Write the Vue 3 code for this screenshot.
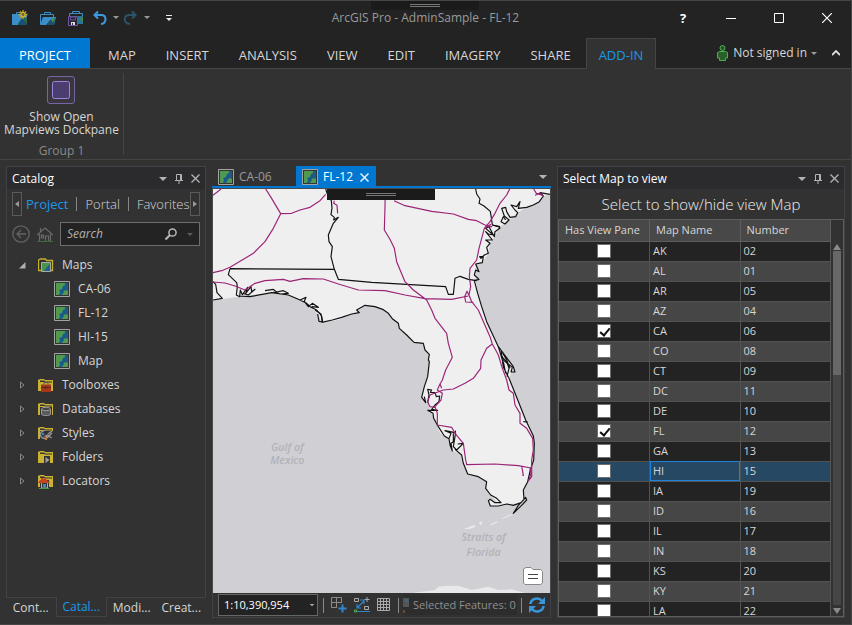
<script setup>
import { ref } from 'vue'

const ribbonTabs = ['MAP', 'INSERT', 'ANALYSIS', 'VIEW', 'EDIT', 'IMAGERY', 'SHARE']
const maps = ['CA-06', 'FL-12', 'HI-15', 'Map']
const folders = ['Toolboxes', 'Databases', 'Styles', 'Folders', 'Locators']
const dockTabs = ['Cont...', 'Catal...', 'Modi...', 'Creat...']
const search = ref('')
const rows = ref([
  ['AK', '02'], ['AL', '01'], ['AR', '05'], ['AZ', '04'], ['CA', '06', true],
  ['CO', '08'], ['CT', '09'], ['DC', '11'], ['DE', '10'], ['FL', '12', true],
  ['GA', '13'], ['HI', '15'], ['IA', '19'], ['ID', '16'], ['IL', '17'],
  ['IN', '18'], ['KS', '20'], ['KY', '21'], ['LA', '22']
].map(([name, number, open]) => ({ name, number, open: !!open })))
const selected = ref('HI')
</script>

<template>
  <div class="app">
    <header class="titlebar">
      <div class="quick">
        <button aria-label="New project" class="q">
          <svg width="16" height="16" viewBox="0 0 16 16"><path d="M4.500 4V2.500H9" fill="none" stroke="#3a8fc8" /><path d="M0 4h15v11H0z" fill="#3a8fc8" /><path d="M6 14l4-6 5-1v8H6z" fill="#1d4f70" /><path d="M11 9l4-1v6z" fill="#2f6b3a" /><path d="M11 0v9M6.500 4.500h9M8 1.500l6 6M14 1.500l-6 6" stroke="#c8ac2c" stroke-width="1.300" /><circle cx="11" cy="4.500" r="2" fill="#6e6024" stroke="#e0c030" /></svg>
        </button>
        <button aria-label="Open project" class="q">
          <svg width="16" height="16" viewBox="0 0 16 16"><path d="M4.500 4V2.500h6V4M.5 14V4.500h13V7" fill="none" stroke="#3a8fc8" /><path d="M0 15L3 7h13l-2 8z" fill="#3a8fc8" /><path d="M6 15l4-5 5-2-1 7z" fill="#1d4f70" /><path d="M11 9l4-1-2 5z" fill="#4c8f3c" /></svg>
        </button>
        <button aria-label="Save project" class="q">
          <svg width="16" height="16" viewBox="0 0 16 16"><path d="M4.500 4V1.500h7V4M1.500 6V3.500h13v10H10" fill="none" stroke="#3a8fc8" /><path d="M10 6h5v8h-5z" fill="#2b7395" /><path d="M12 8l3-1v5z" fill="#4c8f3c" /><path d="M.5 6.500h9v9h-9z" fill="#272330" stroke="#7355a8" /><path d="M2.500 7h5v3h-5z" fill="#272330" stroke="#65509a" /><path d="M3 12h4v3H3z" fill="#ddd" /><path d="M4 13h1v2H4z" fill="#333" /></svg>
        </button>
        <button aria-label="Undo" class="q undo">
          <svg width="16" height="16" viewBox="0 0 16 16"><path d="M6 1.500L2.500 5 6 8.500M3 5h6c6 0 6 8 0 9" fill="none" stroke="#3e9bdd" stroke-width="2" /></svg>
        </button>
        <button aria-label="Undo list" class="drop"><i class="caret small"></i></button>
        <button aria-label="Redo" class="q redo">
          <svg width="16" height="16" viewBox="0 0 16 16"><path d="M9 1.500L12.500 5 9 8.500M12 5H7C0 5 0 13 7 14" fill="none" stroke="#2c536c" stroke-width="2" /></svg>
        </button>
        <button aria-label="Redo list" class="drop"><i class="caret small"></i></button>
        <button aria-label="Customize" class="q custom">
          <svg width="6" height="6" viewBox="0 0 6 6"><path d="M0 0h6v1H0zM0 3h6L3 6z" fill="#e8e8e8" /></svg>
        </button>
      </div>
      <h1>ArcGIS Pro - AdminSample - FL-12</h1>
      <div class="window">
        <button aria-label="Help"><b>?</b></button>
        <button aria-label="Minimize"><svg width="10" height="10"><path d="M0 5.500h10" stroke="#fff" /></svg></button>
        <button aria-label="Maximize"><svg width="10" height="10"><path d="M.5.5h9v9h-9z" stroke="#fff" fill="none" /></svg></button>
        <button aria-label="Close"><svg width="10" height="10"><path d="M0 0l10 10M10 0L0 10" stroke="#fff" stroke-width="1.200" /></svg></button>
      </div>
      <div class="grip top"><i></i></div>
    </header>

    <nav class="tabs">
      <button class="project">PROJECT</button>
      <button v-for="t in ribbonTabs" :key="t">{{ t }}</button>
      <button class="current">ADD-IN</button>
      <div class="account">
        <svg width="11" height="16" viewBox="0 0 11 16"><circle cx="5.500" cy="3" r="2.500" fill="#28502a" stroke="#4fae50" /><path d="M.5 7.500l2-1h6l2 1V13h-2v2.500h-6V13h-2z" fill="#28602c" stroke="#4fae50" /></svg>
        <button class="signin">Not signed in <i class="caret tiny"></i></button>
        <button aria-label="Collapse ribbon" class="collapse"><svg width="8" height="6"><path d="M0 5l4-4 4 4" fill="none" stroke="#ddd" stroke-width="1.800" /></svg></button>
      </div>
    </nav>

    <section class="ribbon">
      <div class="group">
        <button class="big">
          <svg width="28" height="28" viewBox="0 0 28 28"><rect x=".5" y=".5" width="27" height="27" rx="2.500" fill="#39363e" stroke="#7765a5" /><rect x="5.500" y="5.500" width="17" height="17" rx="2" fill="#4c3d70" stroke="#9c86dc" /></svg>
          <span>Show Open<br>Mapviews Dockpane</span>
        </button>
        <p>Group 1</p>
      </div>
    </section>

    <main class="workspace">
      <aside class="dock">
        <div class="catalog">
          <div class="panehead">
            <h2>Catalog</h2>
            <button aria-label="Pane options"><i class="caret"></i></button>
            <button aria-label="Pin"><svg width="8" height="10"><path d="M1.500 6V.5h5V6M0 6.500h8M4 7v3M5.500 1v5" stroke="#b4b4b4" fill="none" /></svg></button>
            <button aria-label="Close pane"><svg width="9" height="9"><path d="M.5.5l8 8M8.500.5l-8 8" stroke="#b4b4b4" stroke-width="1.300" /></svg></button>
          </div>
          <div class="pages">
            <button aria-label="Scroll left" class="step"><svg width="4" height="6"><path d="M4 0v6L0 3z" fill="#999" /></svg></button>
            <a href="#project" class="on">Project</a><a href="#portal">Portal</a><a href="#favorites">Favorites</a>
            <button aria-label="Scroll right" class="step"><svg width="4" height="6"><path d="M0 0v6l4-3z" fill="#999" /></svg></button>
          </div>
          <div class="find">
            <button aria-label="Back"><svg width="18" height="18"><circle cx="9" cy="9" r="8.200" fill="none" stroke="#636363" stroke-width="1.300" /><path d="M14 9H5M9 5L5 9l4 4" fill="none" stroke="#636363" stroke-width="1.300" /></svg></button>
            <button aria-label="Home"><svg width="16" height="16"><path d="M0 9l8-7 8 7M2.500 8v7M13.500 8v7M3.500 2v4M8.500 15v-5h3v5M4.500 9v3h2V9z" fill="none" stroke="#6a6a6a" stroke-width="1.200" /><path d="M0 15.500h16" stroke="#3a6b3a" /></svg></button>
            <label class="searchbox">
              <input v-model="search" type="text" placeholder="Search" aria-label="Search">
              <svg width="12" height="12"><circle cx="7.500" cy="4.500" r="3.600" fill="none" stroke="#b8b8b8" stroke-width="1.500" /><path d="M5 7l-4.500 4.500" stroke="#b8b8b8" stroke-width="2" /></svg>
              <i class="caret tiny dim"></i>
            </label>
          </div>
          <ul class="tree">
            <li>
              <svg class="arrow" width="7" height="7"><path d="M6.500 0v6.500H0z" fill="#b0b0b0" /></svg>
              <svg class="icon" width="16" height="16"><path d="M3 13.500H.5V3l2-1h5l1 1.500h6v10H13" fill="none" stroke="#c9b02f" stroke-width="1.300" /><path d="M3.500 5.500h9v9h-9z" fill="#4b944e" stroke="#aaa" /><path d="M12 7v7H6l3-4z" fill="#1f5f91" /></svg>
              <span>Maps</span>
            </li>
            <li v-for="m in maps" :key="m" class="child">
              <svg class="icon" width="16" height="16" viewBox="0 0 16 16"><path d="M.5.500h15v15H.5z" fill="#343434" stroke="#a4a4a4" /><path d="M2 2h12v12H2z" fill="#4f9a4e" /><path d="M11 2h3v8l-2-1-2 1-1 3-2 1H5l1-3-1-2 3-1 1-3 2-1z" fill="#1b5b8c" /></svg>
              <span>{{ m }}</span>
            </li>
            <li v-for="f in folders" :key="f">
              <svg class="arrow" width="7" height="8"><path d="M1.500 1v6l3.500-3z" fill="none" stroke="#888" /></svg>
              <svg class="icon" width="16" height="16" viewBox="0 0 16 16">
                <path d="M0 3l2-1h4l1 1h8v11H0z" fill="#cbb233" /><path d="M2 3.500h4l1 1h7v1H7L6 5H2z" fill="#333" />
                <g v-if="f === 'Toolboxes'"><path d="M3 7.500h10V15H3z" fill="#a63619" /><path d="M3 10.500h10M8 9v3" stroke="#57281c" /><path d="M6 7.500v-2h4v2" fill="none" stroke="#555" /></g>
                <g v-else-if="f === 'Databases'"><path d="M2 6h12v9H2z" fill="#333" /><path d="M3.500 8v5c0 2 9 2 9 0V8" fill="#5a5a5a" stroke="#999" /><ellipse cx="8" cy="8" rx="4.500" ry="1.700" fill="#444" stroke="#999" /></g>
                <g v-else-if="f === 'Styles'"><path d="M2 6h13v9H2z" fill="#333" /><path d="M6.500 5.500a4 4 0 1 0 3 6.500l-2-1 2-1 4 3M10 9l4-3M14 8l-5 5" fill="none" stroke="#999" stroke-width="1.300" /><circle cx="5" cy="9" r="1.200" fill="#3b90c8" /><circle cx="6" cy="12" r="1" fill="#b64a28" /><circle cx="8" cy="14" r="1.200" fill="#c07b30" /></g>
                <g v-else-if="f === 'Folders'"><path d="M6 7h6v9H6z" fill="#333" /><path d="M7.500 8v6l4-3z" fill="#a0a0a0" /></g>
                <g v-else><path d="M2 7h9v8H2z" fill="#333" /><path d="M3.500 10v5h6v-5" fill="#333" stroke="#aaa" /><path d="M0 10l2-3h1V5h2v1l2-1 5 5z" fill="#c4451f" /><path d="M5 11h3v3H5z" fill="#2f8fc6" /><path d="M1 15.500h10" stroke="#4c9a45" /></g>
              </svg>
              <span>{{ f }}</span>
            </li>
          </ul>
        </div>
        <div class="docktabs">
          <button v-for="(t, i) in dockTabs" :key="t" :class="{ on: i === 1 }">{{ t }}</button>
        </div>
      </aside>

      <section class="view">
        <div class="viewtabs">
          <button v-for="m in ['CA-06', 'FL-12']" :key="m" :class="{ on: m === 'FL-12' }">
            <svg width="16" height="16" viewBox="0 0 16 16"><path d="M.5.500h15v15H.5z" fill="#343434" stroke="#a4a4a4" /><path d="M2 2h12v12H2z" fill="#4f9a4e" /><path d="M11 2h3v8l-2-1-2 1-1 3-2 1H5l1-3-1-2 3-1 1-3 2-1z" fill="#1b5b8c" /></svg>
            {{ m }}
            <svg v-if="m === 'FL-12'" class="x" width="9" height="9"><path d="M.5.5l8 8M8.500.5l-8 8" stroke="#e6f2fb" stroke-width="1.500" /></svg>
          </button>
          <button aria-label="View list" class="more"><i class="caret"></i></button>
        </div>
        <div class="map">
          <svg class="canvas" viewBox="24 87 1011 1212" preserveAspectRatio="xMidYMid slice">
            <path fill="#efefef" d="M24 87H1035V103L1015 108 1003 125 965 142 938 158 912 180 885 200 868 230 855 250 850 280 832 308 812 312 812 360 818 400 830 440 845 485 880 560 925 625 912 655 935 712 962 780 985 828 988 850 986 900 976 930 968 965 955 990 957 1020 945 1030 905 1032 880 1038 855 1038 852 1018 878 1030 857 1005 842 985 845 965 820 950 788 942 775 910 770 885 740 870 735 850 730 835 705 820 690 780 675 750 668 725 650 712 658 680 668 650 673 605 673 583 660 570 655 550 627 547 605 525 583 505 580 490 562 476 550 460 535 449 510 440 480 436 455 455 440 462 400 480 350 487 338 462 300 425 250 405 200 398 120 407 50 418 24 420Z" />
            <path fill="#e9e9ec" d="M620 1299L690 1290 700 1280 720 1278 760 1277 800 1290 850 1280 880 1290 920 1288 960 1299ZM775 1108l18-8 15-6 4 6-15 6zM822 1088l8-4 2 8-6 4zM855 1094l20-10 3 2-18 10zM890 1076l28-14 3 2-26 13z" />
            <g fill="none" stroke="#111" stroke-width="3.500" stroke-linejoin="round">
              <path d="M24 365L32 373 36 398 52 415 24 420M75 326L388 328M75 326L70 344 95 368 97 380 94 405 104 410 106 390 112 404 128 382 122 400 138 380 140 395 150 388 130 405 115 400M100 408L135 410 200 398 250 405 280 418 305 430 318 442 335 450 350 468 353 486M180 392L205 388 215 396 235 392 250 400 228 402 205 396M285 420L303 412 298 424 310 440 322 430 340 442 320 440" />
              <path d="M330 450L348 462 352 486 342 484 338 462M350 487L382 480 410 472 440 462 463 458 455 450 480 436 510 440 535 449 550 460 562 476 580 490 583 505 605 525 627 547 655 550 660 570 673 583 670 600 673 605 668 650 658 680 650 712 662 728 658 710" />
              <path d="M668 728L672 705 668 688 680 690 676 697 690 698 694 710 704 708 702 725 690 735 680 748 698 751 668 751 684 760 686 775 700 800 718 828 732 836 738 820 720 812 750 818 752 812M732 836L735 855 742 873 738 850 745 845 745 820M752 818L745 860 755 870 775 850 758 852M750 868L770 885 775 910 788 942 820 950 845 965 842 985 857 1005 875 1015 888 1028 870 1028 855 1018 850 1022 856 1038 880 1038 905 1032 925 1036 948 1028 962 1012 965 1020 950 1036 925 1060 940 1036 957 1018 955 990 968 965 976 930 986 900 988 850 985 828 962 780 935 712 912 655" />
              <path d="M362 87L367 102 379 122 381 144 378 164 388 172 386 180 400 172 385 190 370 225 372 245 382 260 378 290 388 328 400 358 500 367 722 380 730 403 745 403 750 355 765 349 790 358 815 362M812 87L815 102 825 117 822 130 837 138 856 154 860 180 862 195 885 200" />
              <path d="M1035 103L1005 98 1015 108 1003 125 985 135 965 142 940 145 945 125 935 140 918 135 930 150 938 158 932 170 915 172 905 155 902 142 890 145 898 168 912 180 900 192 888 185 895 170 902 180M862 195L880 200 885 204 870 215 868 230 852 200 842 205 865 225 850 222 842 215 862 240 842 240 855 250 845 262 850 280 838 285 828 295 824 290 835 290 832 308 812 312 822 335 812 330 808 345 822 358 808 362 818 400 830 440 845 485 880 560 925 620 930 636 918 636 922 622 895 600 890 585 888 570 905 600 915 625" />
              <path d="M880 560L892 600 895 622 912 655M890 590L905 605 912 625 906 650M895 605L902 640" />
              <path d="M955 785L968 786" />
            </g>
            <g fill="none" stroke="#9b2377" stroke-width="3.500" stroke-linejoin="round">
              <path d="M24 106L48 87M182 87L198 112 227 161 205 205 180 245 145 280 75 322 50 332 24 338M227 161L260 160 285 150 315 142 345 122 362 103M24 366L60 369 90 378 120 390 150 370 180 362 235 358 255 364 295 356 355 357 400 372 460 390 540 392 600 405 660 416 740 418 790 408M388 122L386 130 396 136 398 160M541 87L540 140 538 210 556 240 568 265 575 305 600 365 625 390 665 420 680 450 690 475 725 520 730 550 742 592 722 630 712 660 705 672 697 690 712 700 708 720 690 740 697 760 697 795 740 802 750 820 775 850 782 900 785 914 870 912 940 917 978 924M705 672L710 685" />
              <path d="M567 122L600 137 680 154 745 162 790 178 815 182 840 195 860 200 845 200 858 193M914 87L905 105 885 130 870 160 855 185 838 205 830 235 822 265 815 300 795 325 793 350 797 380 792 405 800 425 820 450 833 480 855 530 862 552 880 585 892 625 905 660 912 690 925 700 930 735 945 760 945 790 965 805 983 835 985 870 980 900 980 950 970 963 978 940 975 925M793 408L786 394 779 410 782 426 805 427M986 87L994 100 1014 106M990 106L1010 98M862 552L845 565 828 600 827 625 805 655 780 670 745 687 715 690 675 705 668 725 675 740 690 742M950 918L955 946 952 946" />
            </g>
            <g class="water" text-anchor="middle">
              <text x="247" y="872">Gulf of</text><text x="247" y="913">Mexico</text>
              <text x="836" y="1144">Straits of</text><text x="836" y="1187">Florida</text>
            </g>
          </svg>
          <div class="grip"><i></i></div>
          <button aria-label="Map notes" class="note"><svg width="22" height="20"><path d="M4 1.500h5l2 2h7.500l2 2V17l-2 1.500H3L1.500 17V3z" fill="#fff" stroke="#888" /><path d="M6 8.500h10M6 12.500h10" stroke="#444" /></svg></button>
        </div>
        <div class="status">
          <select aria-label="Map scale"><option>1:10,390,954</option></select>
          <i class="sep"></i>
          <button aria-label="Add view"><svg width="16" height="16"><path d="M.5.5h10v10H.5zM5.500.5v10M.5 5.500h10" fill="none" stroke="#8a8a8a" /><path d="M6 6h10v10H6z" fill="#323232" /><path d="M11.500 7.500v8M7.500 11.500h8" stroke="#2f86cc" stroke-width="2" /></svg></button>
          <button aria-label="Inference"><svg width="16" height="16"><path d="M.5 1.500h4v3h-4zM10.500 9.500h4v3h-4zM13 0v5M10.500 2.500h5" fill="none" stroke="#aaa" /><path d="M3 11l7-7M6 3h4v4M3 7v4h4M3 14.500h13" fill="none" stroke="#2f86cc" stroke-width="1.200" /><path d="M.5 13h2v2h-2z" stroke="#4fae50" fill="none" /></svg></button>
          <button aria-label="Grid"><svg width="14" height="14"><path d="M.5.5h12v12H.5zM3.500.5v12M6.500.5v12M9.500.5v12M.5 3.500h12M.5 6.500h12M.5 9.500h12" fill="none" stroke="#aaa" /></svg></button>
          <i class="sep"></i>
          <span class="features"><svg width="6" height="16"><path d="M0 1h6v9H0z" fill="#555" /><path d="M2 2h3v3H2z" fill="#2b6d8c" /><path d="M0 13h2v3H0z" fill="#684a38" /></svg>Selected Features: 0</span>
          <i class="sep"></i>
          <button aria-label="Refresh"><svg width="16" height="16" viewBox="0 0 16 16"><path d="M1.500 7C2 1 10 0 13 4M14.500 9C14 15 6 16 3 12" fill="none" stroke="#3a95d9" stroke-width="2.600" /><path d="M16 0v7H9zM0 16V9h7z" fill="#3a95d9" /></svg></button>
        </div>
      </section>

      <aside class="select">
        <div class="panehead">
          <h2>Select Map to view</h2>
          <button aria-label="Pane options"><i class="caret"></i></button>
          <button aria-label="Pin"><svg width="8" height="10"><path d="M1.500 6V.5h5V6M0 6.500h8M4 7v3M5.500 1v5" stroke="#b4b4b4" fill="none" /></svg></button>
          <button aria-label="Close pane"><svg width="9" height="9"><path d="M.5.5l8 8M8.500.5l-8 8" stroke="#b4b4b4" stroke-width="1.300" /></svg></button>
        </div>
        <h3>Select to show/hide view Map</h3>
        <div class="gridbox">
          <div class="scroller">
            <table>
              <thead><tr><th>Has View Pane</th><th>Map Name</th><th>Number</th></tr></thead>
              <tbody>
                <tr v-for="r in rows" :key="r.name" :class="{ sel: r.name === selected }" @click="selected = r.name">
                  <td><input v-model="r.open" type="checkbox" :aria-label="r.name"></td>
                  <td>{{ r.name }}</td>
                  <td>{{ r.number }}</td>
                </tr>
              </tbody>
            </table>
          </div>
          <div class="bar">
            <svg width="8" height="7"><path d="M0 6l4-6 4 6z" fill="#8a8a8a" /></svg>
            <div class="track"><i></i></div>
            <svg width="8" height="7"><path d="M0 0l4 6 4-6z" fill="#8a8a8a" /></svg>
          </div>
        </div>
      </aside>
    </main>
  </div>
</template>

<style>
body { background: #323232; }
</style>

<style scoped>
* { box-sizing: border-box; margin: 0; padding: 0; }
.app { height: 100vh; min-height: 480px; display: flex; flex-direction: column; background: #323232; color: #d6d6d6; font: 12px/16px "Open Sans", "Noto Sans", sans-serif; border-top: 1px solid #454545; border-right: 1px solid #454545; overflow: hidden; }
button, select, input { font: inherit; color: inherit; background: none; border: 0; border-radius: 0; }
button { display: flex; align-items: center; justify-content: center; white-space: nowrap; }
svg { display: block; flex: none; }
a { color: inherit; text-decoration: none; }
h1, h2, h3 { font-weight: 400; white-space: nowrap; }
.caret { display: block; border: 4px solid transparent; border-top-color: #b4b4b4; border-bottom: 0; }
.caret.small, .caret.tiny { border-width: 3px 3px 0; border-top-color: #999; }
.caret.dim { border-top-color: #5c5c5c; }

.titlebar { position: relative; display: grid; grid-template-columns: 1fr auto 1fr; align-items: center; height: 37px; padding-bottom: 4px; background: #232323; flex: none; }
.quick { display: flex; align-items: center; padding-left: 12px; }
.q { width: 16px; height: 20px; margin-right: 12px; }
.undo, .redo { margin-right: 0; }
.undo { margin-left: -4px; }
.drop { width: 15px; height: 20px; }
.custom { margin: 0 0 0 7px; }
h1 { color: #9a9a9a; font-size: 12px; }
.window { display: flex; justify-content: flex-end; }
.window button { width: 48px; height: 30px; color: #fff; }
.window b { font-size: 13px; }
.grip { position: absolute; left: 50%; top: 0; width: 108px; height: 11px; margin-left: -55px; background: #1b1b1b; display: flex; align-items: center; justify-content: center; }
.grip i { width: 30px; height: 3px; border: 1px solid #777; border-width: 1px 0; }
.grip.top { height: 9px; }

.tabs { display: flex; height: 31px; background: #232323; border-bottom: 1px solid #44444a; font-size: 13px; flex: none; }
.tabs > button { padding: 3px 15px 0; }
.tabs .project { background: #0078d2; color: #fff; width: 90px; margin-right: 3px; }
.tabs .current { background: #323232; color: #1c97ea; border: 1px solid #44444a; border-bottom: 0; margin-bottom: -1px; padding: 2px 12px 0; }
.account { margin-left: auto; display: flex; align-items: center; gap: 5px; padding-right: 7px; font-size: 12px; }
.signin { gap: 4px; }
.collapse { width: 16px; height: 20px; margin-left: 6px; }

.ribbon { height: 91px; flex: none; border-bottom: 1px solid #454545; padding: 4px 0; }
.group { width: 124px; height: 82px; border-right: 1px solid #454545; display: flex; flex-direction: column; align-items: center; padding-top: 3px; }
.big { flex-direction: column; gap: 6px; line-height: 13px; }
.group p { margin-top: 7px; color: #8a8a8a; }

.workspace { flex: 1; min-height: 0; display: grid; grid-template-columns: 200px minmax(0, 1fr) 288px; gap: 6px; padding: 6px 6px; border-bottom: 1px solid #454545; }
.dock, .view, .select { display: flex; flex-direction: column; min-height: 0; min-width: 0; }
.catalog { flex: 1; min-height: 0; border: 1px solid #414147; border-bottom: 0; }
.panehead { display: flex; align-items: center; gap: 8px; height: 22px; background: #2b2b2e; padding: 1px 5px 0; flex: none; }
.panehead h2 { flex: 1; font-size: 12px; color: #fff; }
.pages { display: flex; align-items: center; height: 24px; margin: 3px 5px 0; font-size: 13px; font-weight: 300; }
.pages .on { color: #1c97ea; font-weight: 400; }
.pages a { padding: 0 8px; line-height: 14px; border-left: 1px solid #888; }
.pages a.on { border: 0; padding-left: 4px; }
.pages a:last-of-type { flex: 1; padding-right: 0; }
.step { width: 10px; height: 24px; border: 1px solid #5a5a5a; flex: none; }
.find { display: flex; align-items: center; gap: 7px; padding: 6px 5px 0; }
.searchbox { flex: 1; min-width: 0; display: flex; align-items: center; gap: 10px; height: 24px; border: 1px solid #6e6e6e; background: #232323; padding: 0 6px; }
.searchbox input { flex: 1; min-width: 0; outline: 0; }
.searchbox input::placeholder { color: #b0b0b0; font-style: italic; opacity: 1; }
.tree { list-style: none; padding-top: 7px; }
.tree li { display: flex; align-items: center; height: 24px; padding-left: 12px; }
.arrow { width: 8px; margin-right: 11px; }
.icon { margin-right: 8px; }
.tree .child { padding-left: 47px; }
.docktabs { display: flex; height: 21px; flex: none; }
.docktabs button { flex: 1; height: 20px; border-top: 1px solid #414147; }
.docktabs .on { color: #1c97ea; border: 1px solid #414147; border-top: 0; }

.viewtabs { display: flex; height: 22px; border-bottom: 2px solid #0078d2; flex: none; }
.viewtabs button { gap: 5px; padding: 2px 6px 0; color: #9a9a9a; width: 84px; justify-content: flex-start; }
.viewtabs .on { background: #0078d2; color: #fff; width: 80px; }
.viewtabs .x { margin-left: 2px; }
.viewtabs .more { margin-left: auto; width: 18px; }
.map { position: relative; flex: 1; min-height: 0; border: 1px solid #4a4a4a; border-width: 1px 1px 0; background: #d0cfd4; overflow: hidden; }
.canvas { width: 100%; height: 100%; }
.water { fill: #b2b2b8; font: italic 600 32px "Open Sans", sans-serif; }
.note { position: absolute; right: 6px; bottom: 7px; }
.status { display: flex; align-items: center; height: 25px; gap: 7px; flex: none; padding: 0 5px; border: 1px solid #414147; border-top: 0; font-size: 11px; }
.status select { appearance: none; flex: none; width: 100px; height: 22px; margin-right: -2px; border: 1px solid #666; padding-left: 5px; color: #fff; background: #232323 conic-gradient(from 315deg at 50% 100%, #999 90deg, transparent 0) 90px 9px / 6px 3px no-repeat; }
.sep { width: 1px; height: 15px; background: #8a8a8a; flex: none; }
.features { flex: 1; min-width: 0; display: flex; align-items: center; gap: 4px; margin: 0 -3px; color: #8f8f8f; background: #2d2d2d; white-space: nowrap; height: 20px; }

.select { border: 1px solid #414147; }
h3 { text-align: center; font-size: 15px; font-weight: 300; line-height: 30px; color: #eee; }
.gridbox { display: flex; flex: 1; min-height: 0; border: 1px solid #5e5e5e; }
.scroller { flex: 1; min-width: 0; overflow: hidden; }
table { width: 100%; border-collapse: collapse; table-layout: fixed; font-size: 11px; line-height: 14px; }
th { height: 21px; text-align: left; font-weight: 400; background: #484848; padding: 0 6px; border-right: 1px solid #5e5e5e; border-bottom: 1px solid #5e5e5e; }
td { height: 20px; border-right: 1px solid #525252; border-bottom: 1px solid #525252; padding: 0 3px; background: #232323; }
tr:nth-child(even) td { background: #464646; }
tr.sel td { background: #274863; }
tr.sel td:nth-child(2) { outline: 1px solid #1e82d8; outline-offset: -1px; }
td:first-child { text-align: center; }
td input { appearance: none; display: block; position: relative; width: 14px; height: 14px; margin: 0 auto; background: #fff; border: 1px solid #6e6e6e; }
td input:checked::after { content: ""; position: absolute; left: 4px; top: 1px; width: 4px; height: 8px; border: solid #111; border-width: 0 2px 2px 0; transform: rotate(40deg); }
.bar { width: 12px; background: #323232; display: flex; flex-direction: column; align-items: center; padding: 24px 0 1px; }
.track { flex: 1; width: 8px; background: #454545; margin-bottom: 3px; }
.track i { display: block; height: 35%; background: #686868; }
</style>
